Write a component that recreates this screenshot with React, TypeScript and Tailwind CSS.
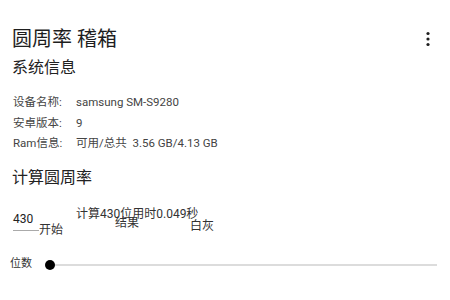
import React from 'react';

const font = { fontFamily: 'Roboto, "Noto Sans CJK SC", sans-serif' };

const InfoRow: React.FC<{ label: string; value: string }> = ({ label, value }) => (
    <div className="flex h-[20.5px] items-center text-[11.5px] leading-[20px] text-[#444]">
        <span className="w-[63px] whitespace-nowrap">{label}</span>
        <span className="whitespace-pre">{value}</span>
    </div>
);

export default function App() {
    return (
        <div className="w-[450px] h-[300px] bg-white overflow-hidden" style={font}>
            {/* header */}
            <div className="flex items-start justify-between pl-[12px] pr-[20px] pt-[25px]">
                <h1 className="text-[20px] leading-[28px] text-[#1e1e1e]">圆周率 稽箱</h1>
                <svg width="4" height="16" viewBox="0 0 4 16" className="mt-[6px]">
                    <circle cx="2" cy="2.5" r="1.6" fill="#1e1e1e" />
                    <circle cx="2" cy="8" r="1.6" fill="#1e1e1e" />
                    <circle cx="2" cy="13.5" r="1.6" fill="#1e1e1e" />
                </svg>
            </div>

            <h2 className="pl-[12px] mt-[4px] text-[16px] leading-[22px] text-[#222]">系统信息</h2>

            <div className="pl-[13px] mt-[13px]">
                <InfoRow label="设备名称:" value="samsung SM-S9280" />
                <InfoRow label="安卓版本:" value="9" />
                <InfoRow label="Ram信息:" value="可用/总共  3.56 GB/4.13 GB" />
            </div>

            <h2 className="pl-[12px] mt-[13px] text-[16px] leading-[22px] text-[#222]">计算圆周率</h2>

            {/* calc row */}
            <div className="flex items-start h-[34px] mt-[18px] pl-[13px] text-[12px] leading-[14px] text-[#333]">
                <div className="w-[26px] mt-[5px] border-b border-[#aaa] pb-[4px] text-[#222]">430</div>
                <div className="w-[37px] mt-[16px] whitespace-nowrap">开始</div>
                <div className="w-[39px] mt-[0px] whitespace-nowrap">计算430位用时0.049秒</div>
                <div className="w-[75px] mt-[9px] whitespace-nowrap">结果</div>
                <div className="mt-[12px] whitespace-nowrap">白灰</div>
            </div>

            {/* slider */}
            <div className="flex items-center h-[20px] mt-[14px] pl-[10px] pr-[13px]">
                <span className="w-[40px] text-[11px] text-[#333]">位数</span>
                <div className="relative flex-1 h-[2px] bg-[#dcdcdc]">
                    <div className="absolute left-[-5px] top-[-4px] w-[10px] h-[10px] rounded-full bg-black" />
                </div>
            </div>
        </div>
    );
}
